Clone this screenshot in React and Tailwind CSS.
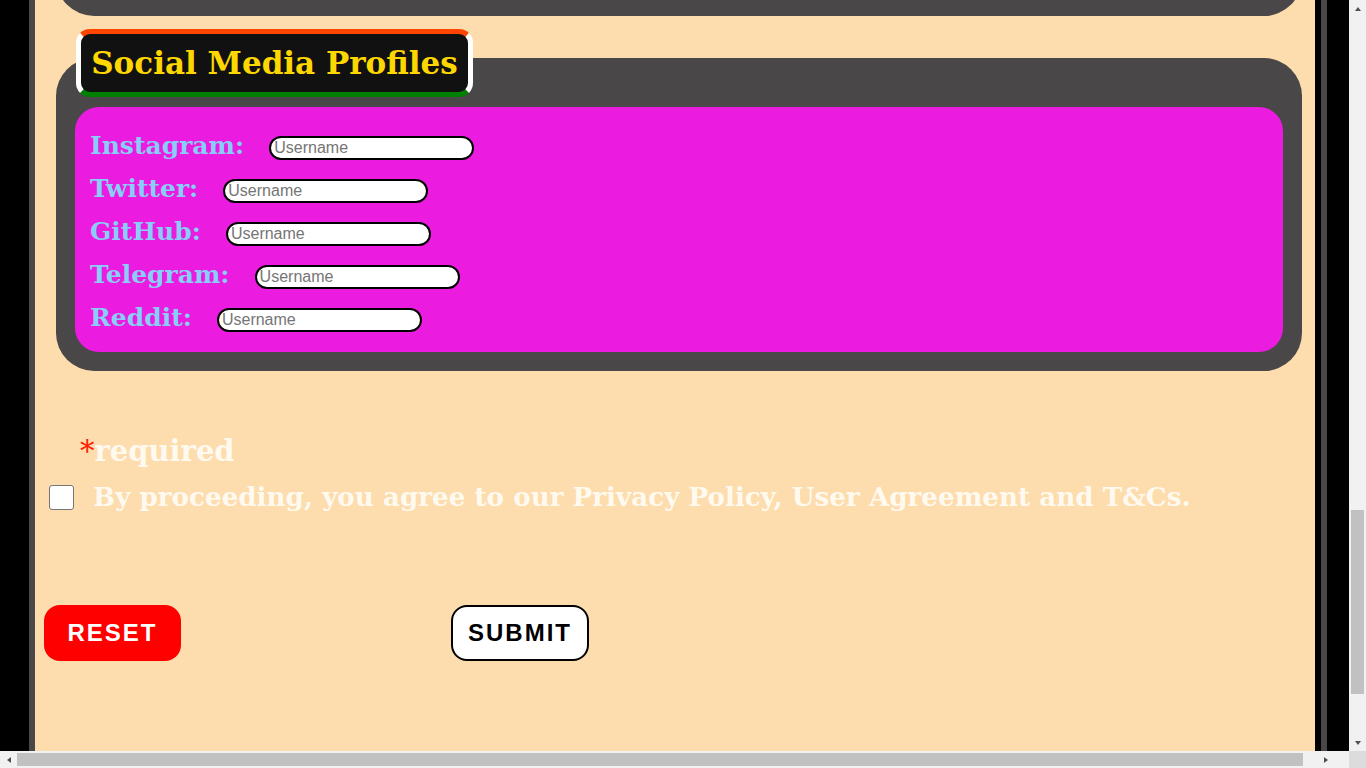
import React from "react";

const serif = { fontFamily: '"DejaVu Serif", serif' };

const profiles = ["Instagram", "Twitter", "GitHub", "Telegram", "Reddit"];

function Arrow({ dir }) {
  const pts = {
    up: "1,6 4,2 7,6",
    down: "1,2 4,6 7,2",
    left: "6,1 2,4 6,7",
    right: "2,1 6,4 2,7",
  }[dir];
  return (
    <svg width="8" height="8" viewBox="0 0 8 8">
      <polygon points={pts} fill="#505050" />
    </svg>
  );
}

function ProfileRow({ name }) {
  return (
    <div className="flex items-center h-[43px]">
      <label
        className="text-[25px] font-bold text-[#87cefa] leading-none -mt-[4px]"
        style={serif}
      >
        {name}:
      </label>
      <input
        type="text"
        placeholder="Username"
        className="ml-[25px] w-[205px] h-[24px] border-2 border-black rounded-full bg-white px-[3px] text-[16px] text-black placeholder:text-[#757575] outline-none"
        style={{ fontFamily: '"Liberation Sans", Arial, sans-serif' }}
      />
    </div>
  );
}

export default function App() {
  return (
    <div className="w-[1366px] h-[768px] overflow-hidden flex flex-col bg-black">
      <div className="flex flex-1 min-h-0">
        {/* left gutter */}
        <div className="w-[29px] bg-black" />

        {/* page body */}
        <div className="w-[1286px] border-l-[6px] border-[#494748] bg-[#fddcad] flex flex-col overflow-hidden">
          {/* end of previous section */}
          <div className="-mt-[44px] ml-[21px] mr-[13px] h-[60px] bg-[#494748] rounded-b-[38px]" />

          {/* social media profiles */}
          <div className="mt-[13px] ml-[21px] mr-[13px] flex flex-col">
            <div className="relative z-10 ml-[20px] w-[397px] h-[68px] rounded-[14px] border-[5px] border-t-[#ff4500] border-x-white border-b-[#008000] bg-[#111111] flex items-center justify-center">
              <span
                className="text-[31px] font-bold text-[#ffd700] leading-none"
                style={serif}
              >
                Social Media Profiles
              </span>
            </div>
            <div className="-mt-[39px] bg-[#494748] rounded-[38px] pt-[49px] px-[19px] pb-[19px]">
              <div className="bg-[#ec1be0] rounded-[24px] pl-[15px] pt-[19px] pb-[11px] flex flex-col">
                {profiles.map((p) => (
                  <ProfileRow key={p} name={p} />
                ))}
              </div>
            </div>
          </div>

          {/* required note */}
          <div
            className="mt-[66px] ml-[45px] text-[29px] font-bold text-[#fffaf0] leading-none"
            style={serif}
          >
            <span className="text-[#ff2000] font-normal">*</span>required
          </div>

          {/* agreement */}
          <div className="mt-[18px] ml-[14px] flex items-center">
            <input
              type="checkbox"
              className="appearance-none w-[25px] h-[25px] bg-white border border-[#767676] rounded-[3px]"
            />
            <span
              className="ml-[19px] text-[26.2px] font-bold text-[#fffaf0] leading-none"
              style={serif}
            >
              By proceeding, you agree to our Privacy Policy, User Agreement and T&amp;Cs.
            </span>
          </div>

          {/* buttons */}
          <div
            className="mt-[95px] ml-[9px] flex items-center"
            style={{ fontFamily: '"Liberation Sans", Arial, sans-serif' }}
          >
            <button className="w-[137px] h-[56px] rounded-[16px] bg-[#ff0000] text-white text-[24px] font-bold tracking-[2px]">
              RESET
            </button>
            <button className="ml-[270px] w-[138px] h-[56px] rounded-[16px] bg-white border-2 border-black text-black text-[24px] font-bold tracking-[2px]">
              SUBMIT
            </button>
          </div>
        </div>

        {/* right gutter */}
        <div className="w-[6px] bg-black" />
        <div className="w-[6px] bg-[#494748]" />
        <div className="w-[22px] bg-black" />

        {/* vertical scrollbar */}
        <div className="w-[17px] bg-[#f1f1f1] flex flex-col items-center">
          <div className="h-[17px] flex items-center justify-center">
            <Arrow dir="up" />
          </div>
          <div className="mt-[493px] w-[13px] h-[184px] bg-[#c1c1c1]" />
          <div className="mt-auto h-[17px] flex items-center justify-center">
            <Arrow dir="down" />
          </div>
        </div>
      </div>

      {/* horizontal scrollbar */}
      <div className="h-[17px] flex bg-[#f1f1f1]">
        <div className="w-[17px] flex items-center justify-center">
          <Arrow dir="left" />
        </div>
        <div className="my-[2px] w-[1286px] bg-[#c1c1c1]" />
        <div className="flex-1 flex items-center justify-center">
          <Arrow dir="right" />
        </div>
        <div className="w-[17px] bg-[#dcdcdc]" />
      </div>
    </div>
  );
}
